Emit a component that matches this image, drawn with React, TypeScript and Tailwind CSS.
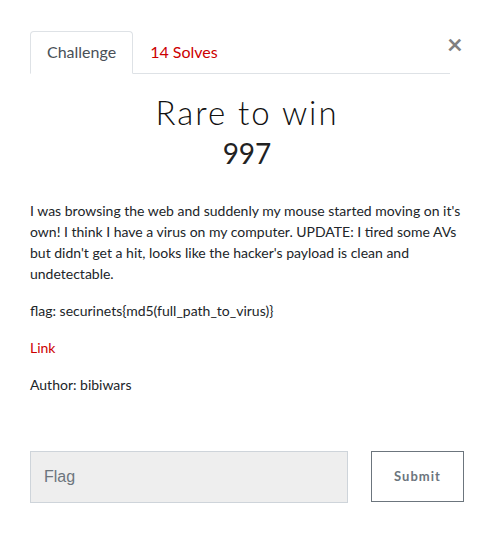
import React from "react";

export default function App() {
  return (
    <div
      className="relative w-[494px] h-[551px] bg-white text-[#212529]"
      style={{ fontFamily: "Lato, 'Open Sans', sans-serif" }}
    >
      <button className="absolute left-[447px] top-[30px] text-[27px] font-bold leading-none text-[#808080]">
        ×
      </button>
      <div className="pt-[31px] pl-[30px]">
        <div className="flex w-[420px] border-b border-[#dee2e6]">
          <div className="-mb-px px-4 py-2 text-[16px] leading-6 text-[#495057] border border-[#dee2e6] border-b-white rounded-t-[4px] bg-white">
            Challenge
          </div>
          <div className="px-4 py-2 text-[16px] leading-6 text-[#c00] border border-transparent">
            14 Solves
          </div>
        </div>
      </div>
      <div className="flex flex-col items-center pt-[14px]">
        <div className="text-[33px] font-light leading-[48px] tracking-[0.06em] text-[#111]">
          Rare to win
        </div>
        <div className="text-[28px] leading-[30px] text-[#222] mt-[2px]">997</div>
      </div>
      <div className="px-[30px] pt-[32px] text-[14px] leading-[21px]">
        <p className="mb-4">
          I was browsing the web and suddenly my mouse started moving on it's own! I think I have a virus on my computer. UPDATE: I tired some AVs but didn't get a hit, looks like the hacker's payload is clean and undetectable.
        </p>
        <p className="mb-4">flag: securinets{"{"}md5(full_path_to_virus){"}"}</p>
        <p className="mb-4">
          <a className="text-[#c00]">Link</a>
        </p>
        <p>Author: bibiwars</p>
      </div>
      <div className="flex pl-[30px] pt-[56px]">
        <div
          className="w-[318px] h-[52px] bg-[#eee] border border-[#ced4da] flex items-center pl-[13px] text-[16px] text-[#6c757d]"
          style={{ fontFamily: "'Liberation Sans', Arial, sans-serif" }}
        >
          Flag
        </div>
        <button className="ml-[23px] w-[93px] h-[51px] border border-[#6c757d] text-[13px] font-bold tracking-[0.08em] text-[#6c757d]">
          Submit
        </button>
      </div>
    </div>
  );
}
